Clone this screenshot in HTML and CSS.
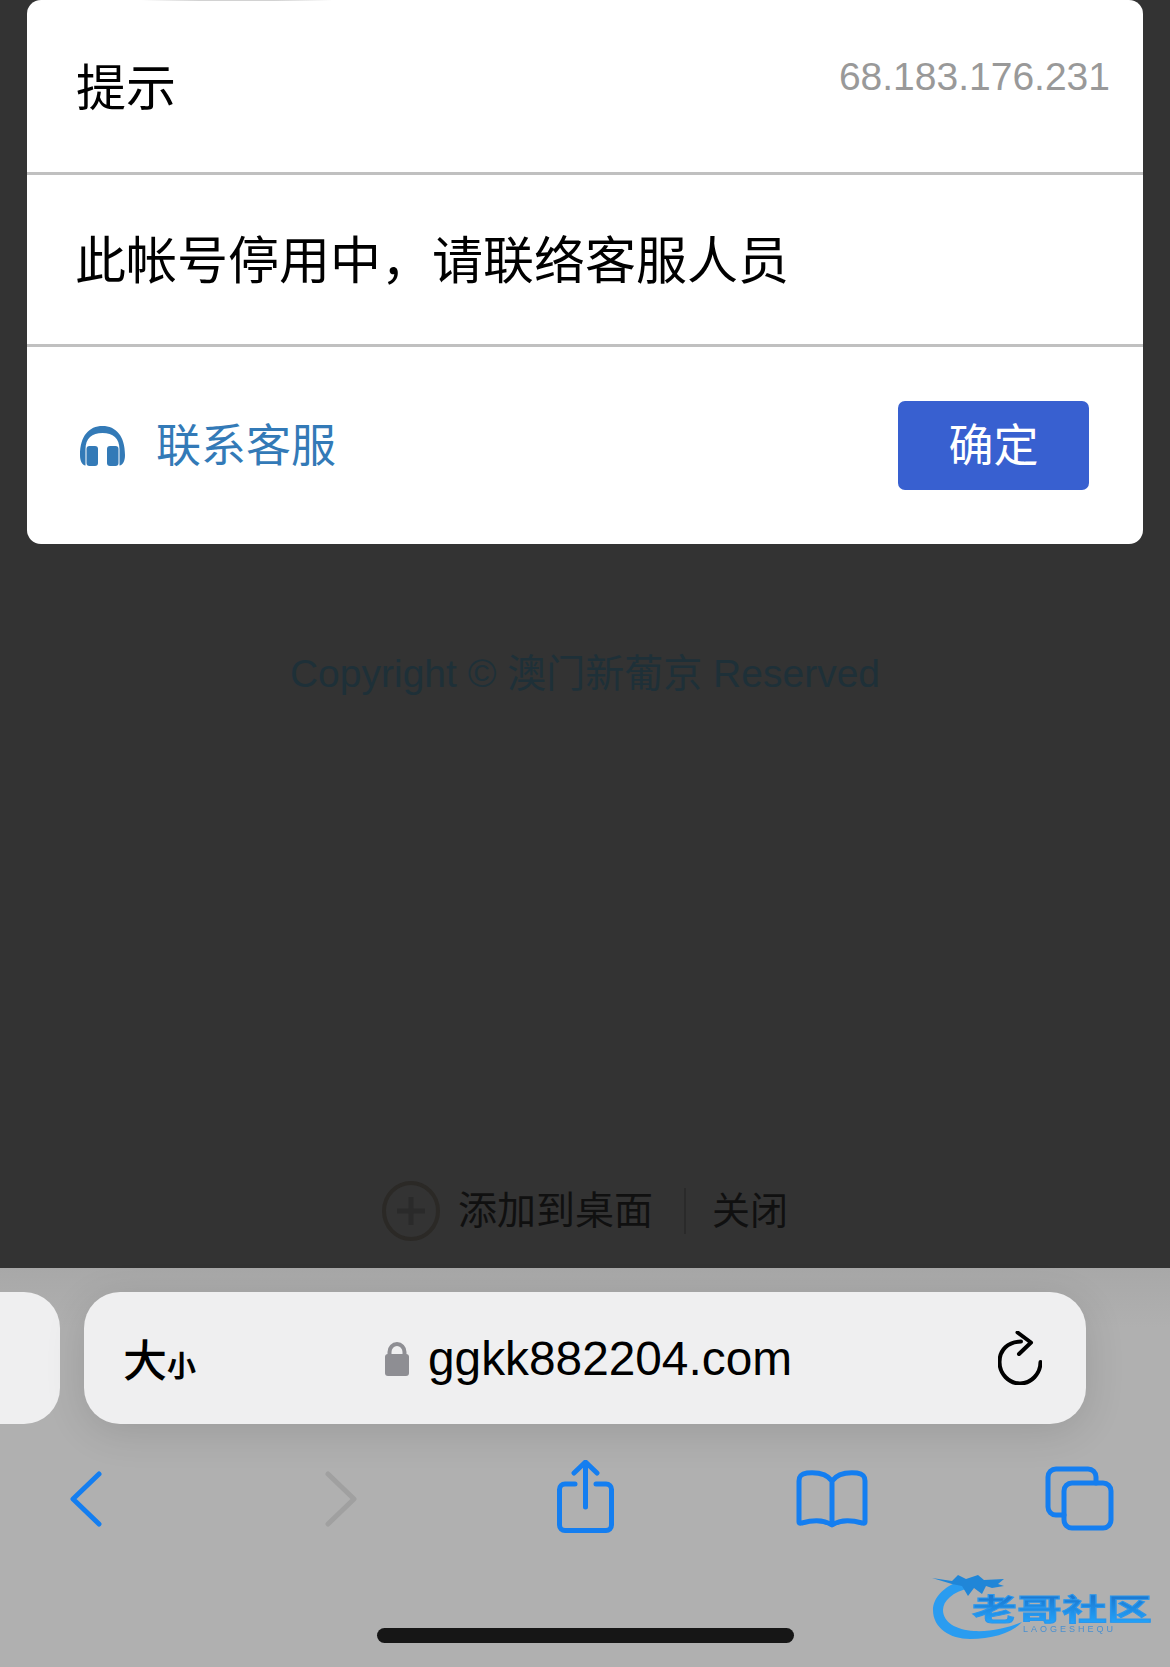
FILE: index.html
```html
<!DOCTYPE html>
<html lang="zh-CN">
<head>
    <meta charset="UTF-8">
    <meta name="viewport" content="width=device-width, initial-scale=1.0">
    <title>提示</title>
    <link rel="stylesheet" href="styles.css">
</head>
<body>

<div class="pagina">
    <div class="dialogo">
        <div class="dialogo-topo">
            <h4>提示</h4>
            <span class="ip">68.183.176.231</span>
        </div>
        <div class="dialogo-corpo">此帐号停用中，请联络客服人员</div>
        <div class="dialogo-rodape">
            <a class="kefu">
                <svg class="kefu-icone" viewBox="0 0 45 40">
                    <path d="M0 29C0 10 9 0 22.500 0S45 10 45 29C45 35 43 39 39.500 39.500L39.500 23.500C39.500 12 33 7 22.500 7S5.500 12 5.500 23.500L5.500 39.500C2 39 0 35 0 29Z"/>
                    <rect x="6.500" y="20" width="11.500" height="20" rx="3"/>
                    <rect x="27" y="20" width="11.500" height="20" rx="3"/>
                </svg>
                <span class="kefu-texto">联系客服</span>
            </a>
            <button class="botao">确定</button>
        </div>
    </div>

    <p class="copyright">Copyright © 澳门新葡京 Reserved</p>

    <div class="adicionar">
        <svg class="adicionar-icone" viewBox="0 0 58 60">
            <ellipse cx="29" cy="30" rx="27" ry="28"/>
            <path d="M29 16V44M15 30H43"/>
        </svg>
        <span class="adicionar-texto">添加到桌面</span>
        <span class="adicionar-linha"></span>
        <span class="adicionar-fechar">关闭</span>
    </div>
</div>

<div class="barra">
    <div class="abas">
        <div class="aba-anterior"></div>
        <div class="endereco">
            <span class="tamanho">大<small>小</small></span>
            <div class="url">
                <svg class="cadeado" viewBox="0 0 24 35">
                    <path class="arco" d="M4.500 16V11A7.500 8 0 0 1 19.500 11V16"/>
                    <rect y="13" width="24" height="22" rx="3"/>
                </svg>
                <span>ggkk882204.com</span>
            </div>
            <svg class="recarregar" viewBox="0 0 44 54">
                <path d="M23 10.500C10 10.500 1.500 19 1.500 31S11 52.500 22 52.500 42.500 43 42.500 31"/>
                <path d="M19.500 1.500L33 11.500 21 23"/>
            </svg>
        </div>
    </div>

    <div class="ferramentas">
        <svg class="ferramenta" viewBox="0 0 80 80">
            <path d="M53 14L27 39 53 64"/>
        </svg>
        <svg class="ferramenta apagado" viewBox="0 0 80 80">
            <path d="M27 14L53 39 27 64"/>
        </svg>
        <svg class="ferramenta" viewBox="0 0 80 80">
            <path d="M30 24H20A5.500 5.500 0 0 0 14.500 29.500V65A5.500 5.500 0 0 0 20 70.500H61A5.500 5.500 0 0 0 66.500 65V29.500A5.500 5.500 0 0 0 61 24H51"/>
            <path d="M40.500 47V3M29 13L40.500 2 52 13"/>
        </svg>
        <svg class="ferramenta" viewBox="0 0 80 80">
            <path d="M40 64V21C35 14 26 12 15 13 9 14 7 16 7 21V62C7 62 7 64 10 63 20 60 31 59 40 65 49 59 60 60 70 63 73 64 73 62 73 62V21C73 16 71 14 65 13 54 12 45 14 40 21"/>
        </svg>
        <svg class="ferramenta" viewBox="0 0 80 80">
            <rect x="24" y="23" width="47" height="45" rx="8"/>
            <path d="M56 23V17A8 8 0 0 0 48 9H16A8 8 0 0 0 8 17V47A8 8 0 0 0 16 55H24"/>
        </svg>
    </div>

    <div class="indicador"></div>

    <svg class="marca" viewBox="0 0 225 70">
        <defs>
            <linearGradient id="azul" x1="0" y1="0" x2="0" y2="1">
                <stop offset="0" stop-color="#1c74cc"/>
                <stop offset="1" stop-color="#22a8ff"/>
            </linearGradient>
        </defs>
        <path class="marca-dragao" d="M30 8C10 15 1 27 1 38C1 56 18 67 38 67C60 67 80 61 90 50C76 56 58 60 42 59C24 58 11 50 11 38C11 29 20 20 38 16Z"/>
        <path class="marca-cabeca" d="M0 6L20 9 26 3 34 7 46 3 52 8 72 7 66 12 72 14 60 16 54 14 50 22 42 16 36 24 30 14 20 12Z"/>
        <text class="marca-nome" transform="translate(40 48) scale(1 .65)">老哥社区</text>
        <text class="marca-sub" x="91" y="60">LAOGESHEQU</text>
    </svg>
</div>

</body>
</html>
```

FILE: styles.css
```css
* {
    box-sizing: border-box;
}
html, body {
    margin: 0;
    padding: 0;
}
body {
    width: 1170px;
    height: 1667px;
    overflow: hidden;
    position: relative;
    font-family: "Liberation Sans", "Noto Sans CJK SC", sans-serif;
    background-color: #adadad;
}
.pagina {
    height: 1268px;
    background-color: #333333;
    padding: 0 27px;
    display: flex;
    flex-direction: column;
}
.dialogo {
    height: 544px;
    position: relative;
    background-color: #ffffff;
    border-radius: 14px;
    display: flex;
    flex-direction: column;
}
/* risco claro no alto do cartao */
.dialogo::before {
    content: "";
    position: absolute;
    left: 115px;
    top: 0;
    width: 190px;
    height: 1px;
    background: linear-gradient(90deg, #ffffff, #d2d2d2 30%, #d2d2d2 70%, #ffffff);
}
.dialogo-topo {
    height: 175px;
    border-bottom: 3px solid #c0c0c0;
    display: flex;
    justify-content: space-between;
    padding: 0 33px 0 49px;
}
.dialogo-topo h4 {
    margin: 58px 0 0;
    font-size: 50px;
    line-height: 62px;
    font-weight: 400;
    color: #000000;
}
.ip {
    margin-top: 54px;
    font-size: 39px;
    line-height: 45px;
    color: #999999;
}
.dialogo-corpo {
    height: 172px;
    border-bottom: 3px solid #c0c0c0;
    padding: 56px 0 0 48px;
    font-size: 51px;
    line-height: 62px;
    color: #000000;
}
.dialogo-rodape {
    flex: 1;
    display: flex;
    justify-content: space-between;
    padding: 54px 54px 0 53px;
}
.kefu {
    display: flex;
    align-items: center;
    gap: 31px;
    height: 89px;
    font-size: 45px;
    color: #337ab7;
}
.kefu-texto {
    margin-bottom: 6px;
}
.kefu-icone {
    width: 45px;
    height: 40px;
    fill: #337ab7;
}
.botao {
    width: 191px;
    height: 89px;
    border: none;
    border-radius: 7px;
    background-color: #3860d0;
    color: #ffffff;
    font-family: inherit;
    font-size: 45px;
    padding: 0 0 6px;
}
.copyright {
    margin: 106px 0 0;
    text-align: center;
    font-size: 39px;
    line-height: 48px;
    color: #1e3038;
}
.adicionar {
    margin-top: auto;
    height: 78px;
    margin-bottom: 22px;
    padding-left: 355px;
    display: flex;
    align-items: center;
    color: #101010;
    font-size: 39px;
}
.adicionar-icone {
    width: 58px;
    height: 60px;
    margin-top: 8px;
    fill: none;
    stroke: #2b2926;
    stroke-width: 4;
}
.adicionar-icone path {
    stroke: #2a2a2a;
    stroke-width: 5;
}
.adicionar-texto {
    margin-left: 18px;
}
.adicionar-linha {
    width: 2px;
    height: 46px;
    margin: 8px 26px 0 31px;
    background-color: #2a2a2a;
}
.adicionar-fechar {
    font-size: 38px;
}
.barra {
    height: 399px;
    background: linear-gradient(#a8a8a8, #b0b0b0 60px);
}
.abas {
    height: 156px;
    padding-top: 24px;
    display: flex;
    gap: 24px;
}
.aba-anterior {
    width: 60px;
    height: 132px;
    border-radius: 0 36px 36px 0;
    background-color: #efeff0;
}
.endereco {
    width: 1002px;
    height: 132px;
    border-radius: 36px;
    background-color: #efeff0;
    box-shadow: 0 8px 40px rgba(0, 0, 0, 0.12);
    display: flex;
    align-items: center;
    padding: 0 44px 0 39px;
}
.tamanho {
    width: 262px;
    font-size: 44px;
    font-weight: 500;
    color: #000000;
}
.tamanho small {
    font-size: 29px;
    font-weight: 700;
}
.url {
    flex: 1;
    display: flex;
    align-items: center;
    gap: 19px;
    font-size: 47.800px;
    color: #000000;
}
.cadeado {
    width: 24px;
    height: 35px;
    fill: #8e8e93;
}
.cadeado .arco {
    fill: none;
    stroke: #8e8e93;
    stroke-width: 4;
}
.recarregar {
    width: 44px;
    height: 54px;
    fill: none;
    stroke: #000000;
    stroke-width: 4;
    stroke-linecap: round;
    stroke-linejoin: round;
}
.ferramentas {
    display: grid;
    grid-template-columns: 255px 244px 247px 248px 80px;
    padding: 36px 0 0 46px;
}
.ferramenta {
    width: 80px;
    height: 80px;
    fill: none;
    stroke: #147ef0;
    stroke-width: 5;
    stroke-linecap: round;
    stroke-linejoin: round;
}
.ferramenta.apagado {
    stroke: #a0a0a0;
}
.indicador {
    position: absolute;
    left: 377px;
    top: 1628px;
    width: 417px;
    height: 15px;
    border-radius: 8px;
    background-color: #161616;
}
.marca {
    position: absolute;
    left: 932px;
    top: 1572px;
    width: 225px;
    height: 70px;
    filter: blur(0.6px);
}
.marca-dragao {
    fill: #2a9cf0;
}
.marca-cabeca {
    fill: #2086d8;
}
.marca-nome {
    font-size: 45px;
    font-weight: 700;
    fill: url(#azul);
    stroke: #2a96ec;
    stroke-width: 1.500;
}
.marca-sub {
    font-size: 9px;
    letter-spacing: 3px;
    fill: #4a90d0;
}
```
